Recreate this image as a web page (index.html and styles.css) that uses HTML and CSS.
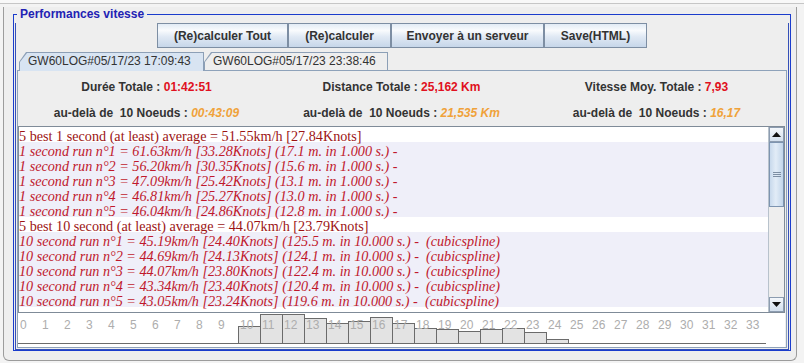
FILE: index.html
```html
<!DOCTYPE html>
<html lang="fr">
<head>
<meta charset="utf-8">
<title>Performances vitesse</title>
<link rel="stylesheet" href="styles.css">
</head>
<body>
<div class="topstrip"></div>
<div class="window">
  <fieldset class="perf">
    <legend>Performances vitesse</legend>
    <div class="inner">
    <div class="toolbar">
      <button class="btn w1">(Re)calculer Tout</button>
      <button class="btn w2">(Re)calculer</button>
      <button class="btn w3">Envoyer à un serveur</button>
      <button class="btn w4">Save(HTML)</button>
    </div>
    <div class="tabs">
      <div class="tab sel"><span>GW60LOG#05/17/23 17:09:43</span></div>
      <div class="tab"><span>GW60LOG#05/17/23 23:38:46</span></div>
    </div>
    <div class="pane">
      <div class="stats">
        <div class="stat"><span class="lbl">Durée Totale : </span><span class="val">01:42:51</span></div>
        <div class="stat"><span class="lbl">Distance Totale : </span><span class="val">25,162 Km</span></div>
        <div class="stat"><span class="lbl">Vitesse Moy. Totale : </span><span class="val">7,93</span></div>
        <div class="stat"><span class="lbl">au-delà de&nbsp; 10 Noeuds : </span><span class="val2">00:43:09</span></div>
        <div class="stat"><span class="lbl">au-delà de&nbsp; 10 Noeuds : </span><span class="val2">21,535 Km</span></div>
        <div class="stat"><span class="lbl">au-delà de&nbsp; 10 Noeuds : </span><span class="val2">16,17</span></div>
      </div>
      <div class="log">
        <div class="lines">
          <div class="ln head">5 best 1 second (at least) average = 51.55km/h [27.84Knots]</div>
          <div class="ln run">1 second run n°1 = 61.63km/h [33.28Knots] (17.1 m. in 1.000 s.) -</div>
          <div class="ln run">1 second run n°2 = 56.20km/h [30.35Knots] (15.6 m. in 1.000 s.) -</div>
          <div class="ln run">1 second run n°3 = 47.09km/h [25.42Knots] (13.1 m. in 1.000 s.) -</div>
          <div class="ln run">1 second run n°4 = 46.81km/h [25.27Knots] (13.0 m. in 1.000 s.) -</div>
          <div class="ln run">1 second run n°5 = 46.04km/h [24.86Knots] (12.8 m. in 1.000 s.) -</div>
          <div class="ln head">5 best 10 second (at least) average = 44.07km/h [23.79Knots]</div>
          <div class="ln run">10 second run n°1 = 45.19km/h [24.40Knots] (125.5 m. in 10.000 s.) -  (cubicspline)</div>
          <div class="ln run">10 second run n°2 = 44.69km/h [24.13Knots] (124.1 m. in 10.000 s.) -  (cubicspline)</div>
          <div class="ln run">10 second run n°3 = 44.07km/h [23.80Knots] (122.4 m. in 10.000 s.) -  (cubicspline)</div>
          <div class="ln run">10 second run n°4 = 43.34km/h [23.40Knots] (120.4 m. in 10.000 s.) -  (cubicspline)</div>
          <div class="ln run">10 second run n°5 = 43.05km/h [23.24Knots] (119.6 m. in 10.000 s.) -  (cubicspline)</div>
        </div>
        <div class="vscroll">
          <div class="sbtn up"><svg width="9" height="5" viewBox="0 0 9 5"><path d="M0 5 L4.5 0 L9 5 Z" fill="#111"/></svg></div>
          <div class="track">
            <div class="thumb"><div class="grip"></div></div>
          </div>
          <div class="sbtn down"><svg width="9" height="5" viewBox="0 0 9 5"><path d="M0 0 L4.5 5 L9 0 Z" fill="#111"/></svg></div>
        </div>
      </div>
      <div class="histo">
        <svg width="766" height="34" viewBox="0 0 766 34">
          <line x1="0" y1="30.5" x2="748" y2="30.5" stroke="#6b6b6b"/>
          <g fill="#e3e3e3" stroke="#6b6b6b">
            <rect x="220.5" y="13.5" width="22" height="17"/>
            <rect x="242.5" y="1.5" width="22" height="29"/>
            <rect x="264.5" y="1.5" width="22" height="29"/>
            <rect x="286.5" y="5.5" width="22" height="25"/>
            <rect x="308.5" y="10.5" width="22" height="20"/>
            <rect x="330.5" y="8.5" width="22" height="22"/>
            <rect x="352.5" y="4.5" width="22" height="26"/>
            <rect x="374.5" y="10.5" width="22" height="20"/>
            <rect x="396.5" y="15.5" width="22" height="15"/>
            <rect x="418.5" y="16.5" width="22" height="14"/>
            <rect x="440.5" y="18.5" width="22" height="12"/>
            <rect x="462.5" y="16.5" width="22" height="14"/>
            <rect x="484.5" y="15.5" width="22" height="15"/>
            <rect x="506.5" y="19.5" width="22" height="11"/>
            <rect x="528.5" y="26.5" width="22" height="4"/>
          </g>
          <g class="nums" fill="#adadad">
            <text x="2" y="16">0</text><text x="24" y="16">1</text><text x="46" y="16">2</text><text x="68" y="16">3</text>
            <text x="90" y="16">4</text><text x="112" y="16">5</text><text x="134" y="16">6</text><text x="156" y="16">7</text>
            <text x="178" y="16">8</text><text x="200" y="16">9</text><text x="222" y="16">10</text><text x="244" y="16">11</text>
            <text x="266" y="16">12</text><text x="288" y="16">13</text><text x="310" y="16">14</text><text x="332" y="16">15</text>
            <text x="354" y="16">16</text><text x="376" y="16">17</text><text x="398" y="16">18</text><text x="420" y="16">19</text>
            <text x="442" y="16">20</text><text x="464" y="16">21</text><text x="486" y="16">22</text><text x="508" y="16">23</text>
            <text x="530" y="16">24</text><text x="552" y="16">25</text><text x="574" y="16">26</text><text x="596" y="16">27</text>
            <text x="618" y="16">28</text><text x="640" y="16">29</text><text x="662" y="16">30</text><text x="684" y="16">31</text>
            <text x="706" y="16">32</text><text x="728" y="16">33</text>
          </g>
        </svg>
      </div>
    </div>
    </div>
  </fieldset>
</div>
</body>
</html>
```

FILE: styles.css
```css
* { box-sizing: border-box; }
html, body { margin: 0; padding: 0; }
body {
  width: 804px;
  height: 363px;
  overflow: hidden;
  background: #f3f3f3;
  font-family: "Liberation Sans", Arial, sans-serif;
  font-size: 12px;
  color: #333;
}
.topstrip {
  height: 4px;
  background: #f8f8f8;
  border-bottom: 1px solid #c6c6c6;
}
.window {
  margin-left: 3px;
  width: 794px;
  height: 354px;
  background: #eeeeee;
  border: 1px solid #9c9c9c;
  border-top: 0;
  border-radius: 0 0 6px 6px;
  padding-left: 9px;
}
.perf {
  margin: 3px 0 0 0;
  width: 778px;
  height: 344px;
  border: 1px solid #1a3ccc;
  padding: 2px 1px 0 1px;
  min-width: 0;
}
.perf legend {
  padding: 0 3px;
  margin-left: 2px;
  font-weight: bold;
  font-size: 12px;
  line-height: 14px;
  color: #2222b4;
}
.inner {
  border: solid #3550b8;
  border-width: 0 1px 1px 1px;
  padding: 0 1px 1px 1px;
}
.toolbar {
  display: flex;
  justify-content: center;
}
.btn {
  height: 25px;
  margin: 0;
  padding: 0;
  font-family: "Liberation Sans", Arial, sans-serif;
  font-size: 12px;
  font-weight: bold;
  color: #333;
  border: 1px solid #7d8ea3;
  background: linear-gradient(#e2ebf5 0%, #f9fbfd 28%, #e0e9f4 55%, #c6d6e9 100%);
}
.w1 { width: 131px; }
.w2 { width: 103px; }
.w3 { width: 153px; }
.w4 { width: 103px; }
.tabs {
  position: relative;
  z-index: 1;
  display: flex;
  align-items: flex-start;
  height: 18px;
  margin: 4px 0 0 2px;
}
.tab {
  position: relative;
  width: 185px;
  height: 18px;
  background: #8c9fb6;
  clip-path: polygon(0 10px, 7px 0, 100% 0, 100% 100%, 0 100%);
  font-size: 12px;
  line-height: 18px;
  color: #333;
  padding-left: 9px;
}
.tab.sel { height: 19px; }
.tab + .tab { width: 184px; }
.tab::before {
  content: "";
  position: absolute;
  left: 1px;
  top: 1px;
  right: 1px;
  bottom: 0;
  background: #eeeeee;
  clip-path: polygon(0 9px, 7px 0, 100% 0, 100% 100%, 0 100%);
}
.tab.sel::before { background: #d8e4f2; }
.tab span { position: relative; }
.pane {
  width: 770px;
  height: 278px;
  border: 1px solid #8ea2ba;
  background: #eeeeee;
}
.stats {
  display: grid;
  grid-template-columns: repeat(3, 255px);
  grid-template-rows: 26px 26px;
  padding: 3px 0 0 1px;
  height: 55px;
}
.stat {
  text-align: center;
  line-height: 26px;
  font-weight: bold;
  white-space: nowrap;
  color: #333;
}
.val { color: #e01020; }
.val2 { color: #f0a23a; font-style: italic; }
.log {
  display: flex;
  width: 767px;
  height: 187px;
  border: 1px solid #7f8b98;
  background: #ffffff;
}
.lines {
  flex: 1;
  min-width: 0;
  font-family: "Liberation Serif", "Times New Roman", serif;
  font-size: 14.2px;
  line-height: 15px;
  overflow: hidden;
}
.ln { height: 15px; padding-top: 2px; white-space: pre; }
.head { color: #9c1414; background: #ffffff; }
.run { color: #c0182c; font-style: italic; background: #efeff9; }
.vscroll {
  width: 16px;
  display: flex;
  flex-direction: column;
  background: #eeeeee;
  border-left: 1px solid #b8c2cc;
}
.sbtn {
  height: 15px;
  display: flex;
  align-items: center;
  justify-content: center;
  border: 1px solid #8c9cb0;
  background: linear-gradient(#f4f7fb, #d3e0ee);
}
.track {
  flex: 1;
  background: #eeeeee;
}
.thumb {
  height: 65px;
  border: 1px solid #7d94b0;
  background: linear-gradient(90deg, #c8d9ec, #e2ecf7 45%, #c2d5ea);
  display: flex;
  align-items: center;
  justify-content: center;
}
.grip {
  width: 8px;
  height: 5px;
  border-top: 1px solid #7d8ea3;
  border-bottom: 1px solid #7d8ea3;
  position: relative;
}
.grip::after {
  content: "";
  position: absolute;
  left: 0; right: 0; top: 1px;
  border-top: 1px solid #7d8ea3;
}
.histo {
  height: 34px;
  background: #ffffff;
  width: 767px;
}
.histo svg { display: block; }
.nums text {
  font-family: "Liberation Sans", Arial, sans-serif;
  font-size: 12px;
}
```
